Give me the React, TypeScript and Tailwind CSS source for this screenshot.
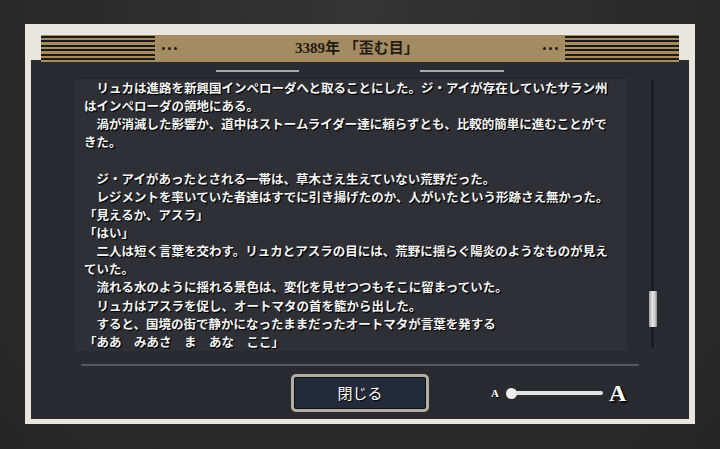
const lines: string[] = [
  "　リュカは進路を新興国インペローダへと取ることにした。ジ・アイが存在していたサラン州",
  "はインペローダの領地にある。",
  "　渦が消滅した影響か、道中はストームライダー達に頼らずとも、比較的簡単に進むことがで",
  "きた。",
  "",
  "　ジ・アイがあったとされる一帯は、草木さえ生えていない荒野だった。",
  "　レジメントを率いていた者達はすでに引き揚げたのか、人がいたという形跡さえ無かった。",
  "「見えるか、アスラ」",
  "「はい」",
  "　二人は短く言葉を交わす。リュカとアスラの目には、荒野に揺らぐ陽炎のようなものが見え",
  "ていた。",
  "　流れる水のように揺れる景色は、変化を見せつつもそこに留まっていた。",
  "　リュカはアスラを促し、オートマタの首を籠から出した。",
  "　すると、国境の街で静かになったままだったオートマタが言葉を発する",
  "「ああ　みあさ　ま　あな　ここ」",
];

function Stripes() {
  return (
    <div className="w-[114px] h-[26px] mt-[1px] bg-[repeating-linear-gradient(to_bottom,#1d1914_0px,#1d1914_2px,transparent_2px,transparent_4.4px)]" />
  );
}

function Dots() {
  return (
    <div className="flex gap-[3px]">
      <span className="w-[3px] h-[3px] rounded-full bg-[#221c14]" />
      <span className="w-[3px] h-[3px] rounded-full bg-[#221c14]" />
      <span className="w-[3px] h-[3px] rounded-full bg-[#221c14]" />
    </div>
  );
}

export default function App() {
  return (
    <div className="w-[720px] h-[449px] overflow-hidden bg-[#2b2b2b] bg-[radial-gradient(ellipse_at_50%_0%,#343434_0%,#2a2a2a_60%,#262626_100%)] pt-[24px] pl-[25px]">
      <div className="w-[670px] h-[400px] bg-[#e9e6df] px-[6px] pb-[5px] flex flex-col">
        <div className="h-[11px]" />

        {/* header */}
        <div className="relative z-10 mx-[10px] h-[27px] -mb-[2px] bg-[#a38b62] flex items-start">
          <Stripes />
          <div className="h-full flex items-center ml-[7px]">
            <Dots />
          </div>
          <div
            className="flex-1 h-full flex items-center justify-center text-[15px] font-bold text-[#241c12] pr-[6px]"
            style={{ fontFamily: '"Liberation Serif", "Noto Sans CJK JP", serif' }}
          >
            3389年 「歪む目」
          </div>
          <div className="h-full flex items-center mr-[7px]">
            <Dots />
          </div>
          <Stripes />
        </div>

        {/* body */}
        <div className="flex-1 bg-[#2a2b30] flex flex-col">
          <div className="flex pt-[10px] pl-[185px] gap-[121px]">
            <div className="w-[83px] h-[2px] bg-[#a9a9ab]" />
            <div className="w-[84px] h-[2px] bg-[#a9a9ab]" />
          </div>

          <div className="flex mt-[7px] pl-[44px]">
            <div
              className="w-[552px] h-[272px] overflow-hidden bg-[#2f3036] pl-[9px] text-[12.5px] leading-[14px] font-bold text-[#f6f6f6] whitespace-pre [text-shadow:1px_1px_1px_#000,1px_1px_0_#000]"
              style={{ fontFamily: '"Noto Sans CJK JP", sans-serif' }}
            >
              {lines.map((l, i) => (
                <div key={i} className="h-[18.14px] flex items-center">{l}</div>
              ))}
            </div>
            <div className="ml-[24px] mt-[1px] w-[3px] h-[268px] bg-[#1b1c20] flex flex-col">
              <div className="h-[211px]" />
              <div className="-ml-[2px] w-[8px] h-[36px] rounded-[1px] bg-[linear-gradient(to_right,#9c9c9c,#e4e4e4_40%,#cfcfcf_70%,#8e8e8e)]" />
            </div>
          </div>

          <div className="mt-[13px] ml-[50px] w-[558px] h-[2px] bg-[#56575d]" />

          <div className="grid grid-cols-[1fr_auto_1fr] items-center mt-[8px] h-[38px]">
            <div />
            <button
              className="w-[138px] h-[38px] rounded-[5px] border-[3px] border-[#b3aea2] bg-[#232a39] shadow-[inset_0_0_0_1px_#0d0f14] text-white text-[15px] [text-shadow:1px_1px_1px_#000]"
              style={{ fontFamily: '"Noto Sans CJK JP", sans-serif' }}
            >
              閉じる
            </button>
            <div className="flex items-center pl-[62px]">
              <span
                className="text-[11px] font-bold text-white leading-none [text-shadow:1px_1px_1px_#000]"
                style={{ fontFamily: '"Liberation Serif", serif' }}
              >
                A
              </span>
              <div className="ml-[7px] flex items-center">
                <div className="w-[11px] h-[11px] rounded-full bg-[#f1f1f1]" />
                <div className="-ml-[2px] w-[88px] h-[4px] rounded-full bg-[#e2e2e2]" />
              </div>
              <span
                className="ml-[6px] text-[24px] font-bold text-white leading-none [text-shadow:2px_2px_2px_#000]"
                style={{ fontFamily: '"Liberation Serif", serif' }}
              >
                A
              </span>
            </div>
          </div>
        </div>
      </div>
    </div>
  );
}
